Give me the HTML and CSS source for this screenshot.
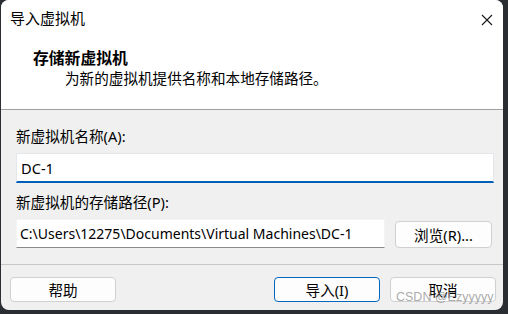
FILE: index.html
```html
<!DOCTYPE html>
<html lang="zh-CN">
<head>
<meta charset="UTF-8" />
<meta name="viewport" content="width=device-width, initial-scale=1" />
<title>导入虚拟机</title>
<link rel="stylesheet" href="styles.css">
</head>
<body>

<div class="window">
  <div class="top">
    <div class="titlebar">
      <span class="title">导入虚拟机</span>
      <span class="close">
        <svg width="12" height="12" viewBox="0 0 12 12"><path d="M1 1 L11 11 M11 1 L1 11" stroke="#1a1a1a" stroke-width="1.1" fill="none"/></svg>
      </span>
    </div>
    <div class="heading">
      <div class="heading-main">存储新虚拟机</div>
      <div class="heading-sub">为新的虚拟机提供名称和本地存储路径。</div>
    </div>
  </div>

  <div class="content">
    <label class="field-label" for="vm-name">新虚拟机名称(A):</label>
    <input class="name-input" id="vm-name" type="text" value="DC-1" />

    <label class="field-label second" for="vm-path">新虚拟机的存储路径(P):</label>
    <div class="path-row">
      <input class="path-input" id="vm-path" type="text" value="C:\Users\12275\Documents\Virtual Machines\DC-1" />
      <button class="btn browse">浏览(R)...</button>
    </div>
  </div>

  <div class="footer">
    <button class="btn">帮助</button>
    <div class="footer-right">
      <button class="btn primary">导入(I)</button>
      <button class="btn">取消</button>
    </div>
  </div>

  <span class="watermark">CSDN @Ezyyyyy</span>
</div>

</body>
</html>
```

FILE: styles.css
```css
html, body { margin: 0; padding: 0; }
body {
  background: #2a2d31;
  width: 508px;
  height: 314px;
  overflow: hidden;
  font-family: "Segoe UI", "Noto Sans", "Noto Sans CJK SC", sans-serif;
  font-size: 14.6px;
  color: #000;
}
.window {
  position: relative;
  margin-left: 1px;
  width: 502px;
  height: 310px;
  background: #f0f0f0;
  border-radius: 8px;
  overflow: hidden;
  display: flex;
  flex-direction: column;
}
.top {
  background: #fff;
  border-bottom: 1px solid #a0a0a0;
  height: 109px;
  flex-shrink: 0;
}
.titlebar {
  height: 36px;
  display: flex;
  align-items: center;
  justify-content: space-between;
  padding-left: 9px;
}
.title { line-height: 20px; font-size: 15px; }
.close {
  width: 32px;
  height: 36px;
  display: flex;
  align-items: center;
  justify-content: center;
  margin-top: 4px;
}
.heading { padding-left: 32px; }
.heading-main {
  font-weight: bold;
  font-size: 15.8px;
  line-height: 20px;
  margin-top: 12px;
}
.heading-sub {
  padding-left: 32px;
  line-height: 20px;
}
.content {
  padding: 16px 10px 0 15px;
  height: 155px;
  flex-shrink: 0;
  border-bottom: 1px solid #c8c8c8;
  box-sizing: border-box;
  display: flex;
  flex-direction: column;
}
.field-label { line-height: 20px; }
.field-label.second { margin-top: 9px; }
.name-input {
  margin-top: 7px;
  height: 30px;
  width: 478px;
  box-sizing: border-box;
  border: 1px solid #e3e7ec;
  border-bottom: 2px solid #005fb8;
  background: #fff;
  padding: 0 4px;
  font: inherit;
  outline: none;
}
.path-row {
  margin-top: 7px;
  display: flex;
  align-items: flex-end;
  gap: 10px;
}
.path-input {
  height: 29px;
  width: 369px;
  box-sizing: border-box;
  border: 1px solid #f4f4f4;
  border-bottom: 1px solid #8a8a8a;
  background: #fff;
  padding: 0 3px;
  font: inherit;
  font-size: 14px;
  outline: none;
}
.btn {
  height: 27px;
  width: 97px;
  box-sizing: border-box;
  border: 1px solid #d0d0d0;
  border-radius: 4px;
  background: #fdfdfd;
  font: inherit;
  color: #000;
  padding: 0;
}
.footer {
  display: flex;
  justify-content: space-between;
  padding: 12px 7px 0 9px;
}
.footer .btn { width: 106px; height: 25px; }
.footer-right { display: flex; gap: 10px; }
.btn.primary { border-color: #0067c0; }
.watermark {
  position: absolute;
  left: 395px;
  top: 290px;
  font-family: "Liberation Sans", sans-serif;
  font-size: 12.5px;
  color: rgba(150, 150, 150, 0.8);
}
```
